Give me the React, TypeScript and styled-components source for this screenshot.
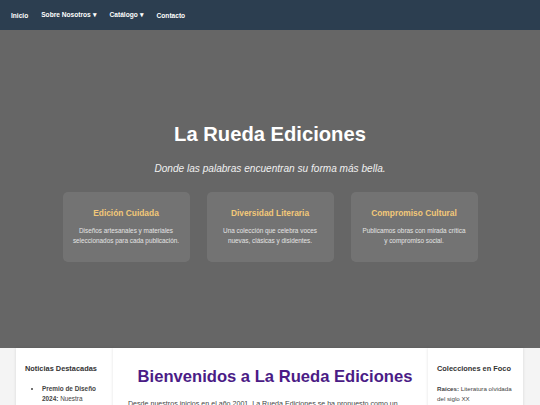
import styled, { createGlobalStyle } from "styled-components";

const GlobalStyle = createGlobalStyle`
  * { box-sizing: border-box; }
  body {
    margin: 0;
    font-family: "Liberation Sans", Arial, sans-serif;
    background: #f4f4f4;
    color: #333;
  }
`;

const Nav = styled.nav`
  height: 30px;
  background: #2c3e50;
  display: flex;
  align-items: center;
  gap: 13px;
  padding-left: 11px;
`;

const NavLink = styled.a`
  color: #fff;
  font-size: 6.6px;
  font-weight: bold;
  text-decoration: none;
`;

const Hero = styled.header`
  height: 318px;
  background: #666;
  padding-top: 92px;
  display: flex;
  flex-direction: column;
  align-items: center;
`;

const HeroTitle = styled.h1`
  margin: 0;
  font-size: 20.2px;
  line-height: 24px;
  color: #fff;
`;

const HeroSubtitle = styled.p`
  margin: 17px 0 0;
  font-size: 10.1px;
  line-height: 12px;
  font-style: italic;
  color: #f0f0f0;
`;

const Cards = styled.div`
  margin-top: 17px;
  display: grid;
  grid-template-columns: repeat(3, 127px);
  gap: 17px;
`;

const Card = styled.div`
  height: 70px;
  background: rgba(255, 255, 255, 0.09);
  border-radius: 5px;
  padding: 16px 6px 0;
  text-align: center;
`;

const CardTitle = styled.h3`
  margin: 0;
  font-size: 8.4px;
  line-height: 10px;
  color: #f2c879;
`;

const CardText = styled.p`
  margin: 8px 0 0;
  font-size: 6.4px;
  line-height: 10px;
  color: #e4e4e4;
`;

const Content = styled.div`
  display: grid;
  grid-template-columns: 97px 315px 95px;
  align-items: start;
  margin-left: 16px;
`;

const Column = styled.section<{ $wide?: boolean }>`
  background: #fff;
  padding: ${(p) => (p.$wide ? "19px 15px 16px" : "16px 9px 16px")};
  box-shadow: 0 0 3px rgba(0, 0, 0, 0.12);
`;

const SideTitle = styled.h4`
  margin: 0;
  font-size: 7.4px;
  line-height: 10px;
  color: #333;
`;

const NewsList = styled.ul`
  margin: 10px 0 0;
  padding-left: 17px;
  font-size: 6.4px;
  line-height: 9.5px;
  color: #444;
`;

const SideText = styled.p`
  margin: 10px 0 0;
  font-size: 6.2px;
  line-height: 9.5px;
  color: #444;
`;

const MainTitle = styled.h2`
  margin: 0;
  text-align: center;
  font-size: 16.6px;
  line-height: 20px;
  color: #4b1c86;
  padding-left: 9px;
`;

const MainText = styled.p`
  margin: 12px 0 0;
  font-size: 7.1px;
  line-height: 11px;
  color: #444;
`;

const cards = [
  {
    title: "Edición Cuidada",
    text: ["Diseños artesanales y materiales", "seleccionados para cada publicación."],
  },
  {
    title: "Diversidad Literaria",
    text: ["Una colección que celebra voces", "nuevas, clásicas y disidentes."],
  },
  {
    title: "Compromiso Cultural",
    text: ["Publicamos obras con mirada crítica", "y compromiso social."],
  },
];

function App() {
  return (
    <>
      <GlobalStyle />
      <Nav>
        <NavLink href="#">Inicio</NavLink>
        <NavLink href="#">Sobre Nosotros ▾</NavLink>
        <NavLink href="#">Catálogo ▾</NavLink>
        <NavLink href="#">Contacto</NavLink>
      </Nav>
      <Hero>
        <HeroTitle>La Rueda Ediciones</HeroTitle>
        <HeroSubtitle>Donde las palabras encuentran su forma más bella.</HeroSubtitle>
        <Cards>
          {cards.map((c) => (
            <Card key={c.title}>
              <CardTitle>{c.title}</CardTitle>
              <CardText>
                {c.text[0]}
                <br />
                {c.text[1]}
              </CardText>
            </Card>
          ))}
        </Cards>
      </Hero>
      <Content>
        <Column>
          <SideTitle>Noticias Destacadas</SideTitle>
          <NewsList>
            <li>
              <strong>Premio de Diseño 2024:</strong> Nuestra edición ilustrada recibió un galardón.
            </li>
          </NewsList>
        </Column>
        <Column $wide>
          <MainTitle>Bienvenidos a La Rueda Ediciones</MainTitle>
          <MainText>
            Desde nuestros inicios en el año 2001, La Rueda Ediciones se ha propuesto como un
            espacio para la palabra cuidada, el diseño artesanal y las voces que merecen ser leídas.
          </MainText>
        </Column>
        <Column>
          <SideTitle>Colecciones en Foco</SideTitle>
          <SideText>
            <strong>Raíces:</strong> Literatura olvidada del siglo XX
          </SideText>
        </Column>
      </Content>
    </>
  );
}

export default App;
